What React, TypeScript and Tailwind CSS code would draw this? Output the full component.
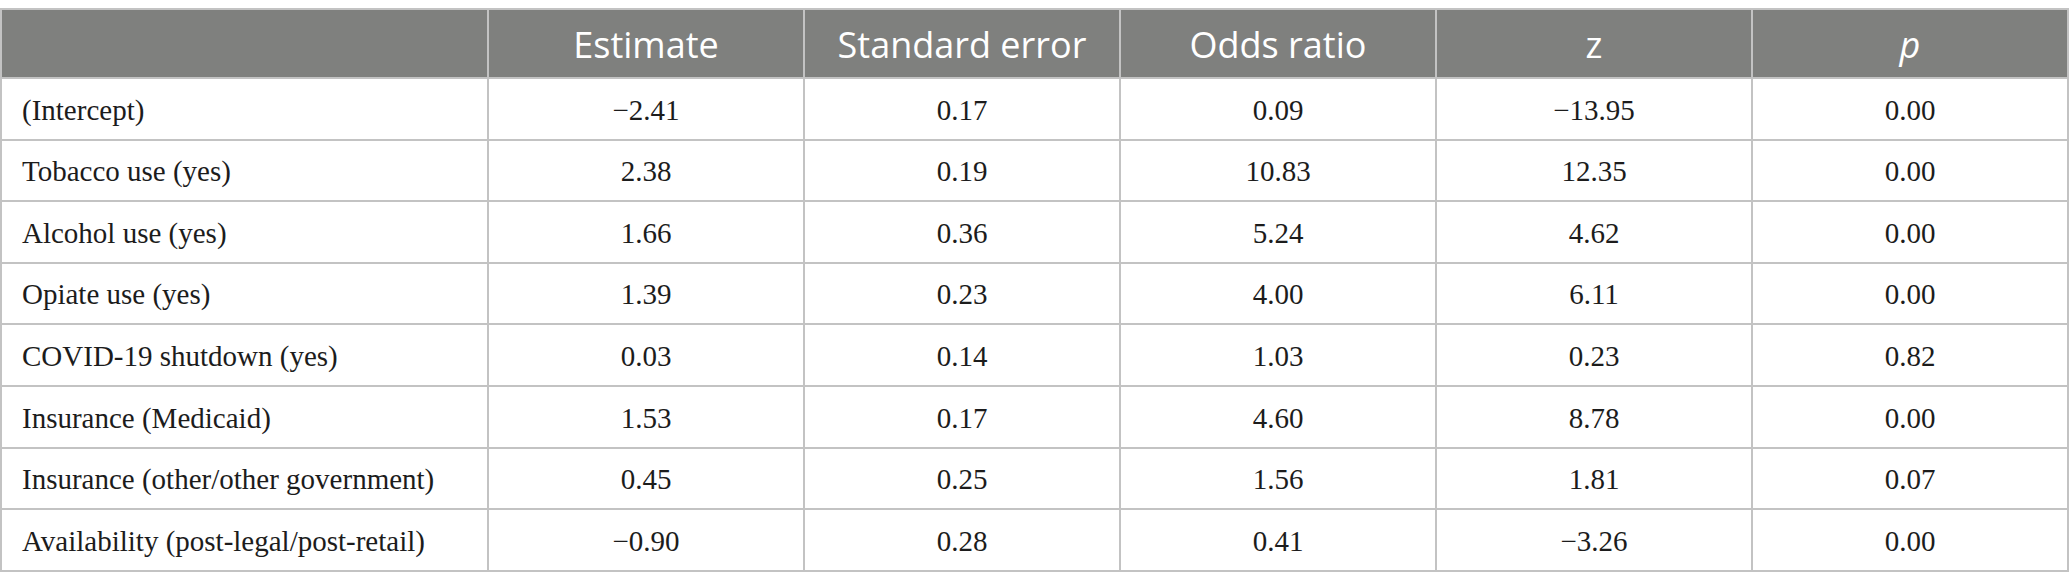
const headers = ["Estimate", "Standard error", "Odds ratio", "z"];

const rows = [
  ["(Intercept)", "−2.41", "0.17", "0.09", "−13.95", "0.00"],
  ["Tobacco use (yes)", "2.38", "0.19", "10.83", "12.35", "0.00"],
  ["Alcohol use (yes)", "1.66", "0.36", "5.24", "4.62", "0.00"],
  ["Opiate use (yes)", "1.39", "0.23", "4.00", "6.11", "0.00"],
  ["COVID-19 shutdown (yes)", "0.03", "0.14", "1.03", "0.23", "0.82"],
  ["Insurance (Medicaid)", "1.53", "0.17", "4.60", "8.78", "0.00"],
  ["Insurance (other/other government)", "0.45", "0.25", "1.56", "1.81", "0.07"],
  ["Availability (post-legal/post-retail)", "−0.90", "0.28", "0.41", "−3.26", "0.00"],
];

const App = () => {
  return (
    <div className="w-[2069px] h-[588px] bg-white pt-2">
      <table className="w-full border-collapse table-fixed">
        <colgroup>
          <col className="w-[487px]" />
          <col />
          <col />
          <col />
          <col />
          <col />
        </colgroup>
        <thead>
          <tr className="h-[69px] bg-[#7f807e] text-white font-['Open_Sans',sans-serif] text-[36px]">
            <th className="border-2 border-[#c3c3c3] font-normal" />
            {headers.map((h) => (
              <th key={h} className="border-2 border-[#c3c3c3] font-normal text-center pt-[2px]">
                {h}
              </th>
            ))}
            <th className="border-2 border-[#c3c3c3] font-normal italic text-center pt-[2px]">p</th>
          </tr>
        </thead>
        <tbody className="font-['Liberation_Serif',serif] text-[29px] text-[#1c1c1c]">
          {rows.map((r, i) => (
            <tr key={i} className="h-[61.6px]">
              {r.map((c, j) => (
                <td
                  key={j}
                  className={
                    j === 0
                      ? "border-2 border-[#c3c3c3] pl-[20px] pt-[3px] text-left"
                      : "border-2 border-[#c3c3c3] pt-[3px] text-center"
                  }
                >
                  {c}
                </td>
              ))}
            </tr>
          ))}
        </tbody>
      </table>
    </div>
  );
};

export default App;
